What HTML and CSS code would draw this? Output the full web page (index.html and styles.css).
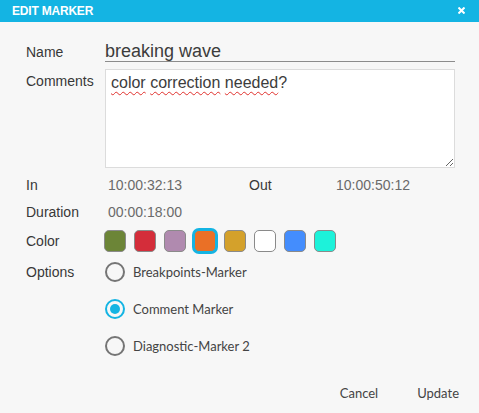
FILE: index.html
```html
<!DOCTYPE html>
<html>
<head>
<meta charset="utf-8">
<link rel="stylesheet" href="styles.css">
</head>
<body>
<div class="dialog">
  <div class="header">
    <span class="title">EDIT MARKER</span>
    <svg class="close" width="7" height="7" viewBox="0 0 7 7"><path d="M0.5 0.5 L6.5 6.5 M6.5 0.5 L0.5 6.5" stroke="#fff" stroke-width="2"/></svg>
  </div>
  <div class="form">
    <div class="row row-name">
      <span class="label">Name</span>
      <div class="input">breaking wave</div>
    </div>
    <div class="row row-comments">
      <span class="label label-top">Comments</span>
      <div class="textarea"><span class="sp">color</span> <span class="sp">correction</span> <span class="sp">needed</span>?</div>
    </div>
    <div class="row row-in">
      <span class="label">In</span>
      <span class="value value-in">10:00:32:13</span>
      <span class="label label-out">Out</span>
      <span class="value">10:00:50:12</span>
    </div>
    <div class="row row-dur">
      <span class="label">Duration</span>
      <span class="value">00:00:18:00</span>
    </div>
    <div class="row row-color">
      <span class="label">Color</span>
      <div class="swatches">
        <span class="swatch c-olive"></span>
        <span class="swatch c-red"></span>
        <span class="swatch c-purple"></span>
        <span class="swatch c-orange selected"></span>
        <span class="swatch c-gold"></span>
        <span class="swatch c-white"></span>
        <span class="swatch c-blue"></span>
        <span class="swatch c-teal"></span>
      </div>
    </div>
    <div class="row row-options">
      <span class="label label-opt">Options</span>
      <div class="radios">
        <div class="radio"><span class="circle"></span><span class="rlabel">Breakpoints-Marker</span></div>
        <div class="radio"><span class="circle checked"></span><span class="rlabel">Comment Marker</span></div>
        <div class="radio"><span class="circle"></span><span class="rlabel">Diagnostic-Marker 2</span></div>
      </div>
    </div>
  </div>
  <div class="footer">
    <span class="btn">Cancel</span>
    <span class="btn">Update</span>
  </div>
</div>
</body>
</html>
```
FILE: styles.css
```css
html, body {
  margin: 0;
  padding: 0;
  background: #f7f7f7;
}
.dialog {
  width: 479px;
  height: 413px;
  background: #f7f7f7;
  font-family: "Liberation Sans", Arial, sans-serif;
  color: #333;
}
.header {
  height: 22px;
  background: #14b4e3;
  display: flex;
  align-items: center;
  justify-content: space-between;
  padding: 0 14px 0 12px;
}
.title {
  color: #fff;
  font-weight: bold;
  font-size: 12px;
  letter-spacing: -0.2px;
}
.close {
  display: block;
  margin-top: -1px;
}
.form {
  padding: 19px 0 0 26px;
}
.row {
  display: flex;
  align-items: center;
}
.label {
  width: 79px;
  flex: none;
  font-size: 14px;
  line-height: 16px;
  color: #383838;
}
.row-name {
  align-items: baseline;
  height: 21px;
}
.input {
  width: 350px;
  height: 20px;
  border-bottom: 1px solid #8c8c8c;
  font-size: 18px;
  line-height: 20px;
  color: #3c3c3c;
}
.row-comments {
  margin-top: 7px;
  align-items: flex-start;
}
.label-top {
  padding-top: 4px;
}
.textarea {
  box-sizing: border-box;
  width: 350px;
  height: 99px;
  background: #fff;
  border: 1px solid #dcdcdc;
  padding: 4px 5px;
  font-size: 16px;
  line-height: 18px;
  color: #3c3c3c;
  overflow: auto;
  resize: both;
}
.sp {
  text-decoration: underline wavy #e0302c;
  text-decoration-thickness: 1px;
  text-underline-offset: 3px;
}
.row-in {
  margin-top: 7px;
  height: 20px;
}
.value {
  font-size: 14px;
  line-height: 16px;
  color: #6a6a6a;
  padding-left: 3px;
}
.value-in {
  width: 144px;
  box-sizing: border-box;
}
.label-out {
  width: 84px;
}
.row-dur {
  margin-top: 7px;
  height: 20px;
}
.row-color {
  margin-top: 8px;
  height: 22px;
}
.swatches {
  display: flex;
  gap: 8px;
  margin-left: -1px;
}
.swatch {
  box-sizing: border-box;
  width: 22px;
  height: 22px;
  border: 1px solid #8a8a8a;
  border-radius: 5px;
}
.swatch.selected {
  border: 1px solid #14b4e3;
  box-shadow: 0 0 0 2px #14b4e3;
}
.c-olive { background: #6c8537; }
.c-red { background: #d42d3a; }
.c-purple { background: #b08aaf; }
.c-orange { background: #ea7026; }
.c-gold { background: #d4a12b; }
.c-white { background: #ffffff; }
.c-blue { background: #448dfd; }
.c-teal { background: #1df2da; }
.row-options {
  margin-top: 10px;
  align-items: flex-start;
}
.label-opt {
  padding-top: 2px;
}
.radios {
  display: flex;
  flex-direction: column;
  gap: 17px;
}
.radio {
  display: flex;
  align-items: center;
  gap: 8px;
  height: 20px;
}
.circle {
  box-sizing: border-box;
  width: 20px;
  height: 20px;
  border: 2px solid #757575;
  border-radius: 50%;
  display: flex;
  align-items: center;
  justify-content: center;
}
.circle.checked {
  border-color: #14b4e3;
}
.circle.checked::after {
  content: "";
  width: 10px;
  height: 10px;
  border-radius: 50%;
  background: #14b4e3;
}
.rlabel {
  font-family: Lato, "Noto Sans", sans-serif;
  font-size: 13px;
  color: #444;
}
.footer {
  display: flex;
  justify-content: flex-end;
  gap: 39px;
  padding: 29px 20px 0 0;
}
.btn {
  font-family: Lato, "Noto Sans", sans-serif;
  font-size: 13px;
  line-height: 16px;
  color: #444;
}
```
